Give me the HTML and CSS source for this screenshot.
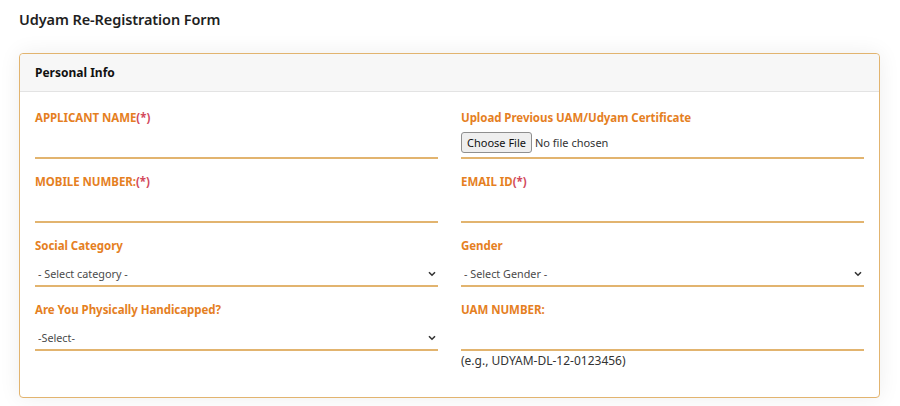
FILE: index.html
```html
<!DOCTYPE html>
<html lang="en">
<head>
<meta charset="utf-8">
<title>Udyam Re-Registration Form</title>
<link rel="stylesheet" href="styles.css">
</head>
<body>
<h1 class="page-title">Udyam Re-Registration Form</h1>
<div class="card">
  <div class="card-header">Personal Info</div>
  <div class="card-body">
    <div class="field">
      <label class="label">APPLICANT NAME<span class="req">(*)</span></label>
      <input class="text-input" type="text">
    </div>
    <div class="field">
      <label class="label">Upload Previous UAM/Udyam Certificate</label>
      <div class="file-wrap"><input class="file-input" type="file"></div>
    </div>
    <div class="field">
      <label class="label">MOBILE NUMBER:<span class="req">(*)</span></label>
      <input class="text-input" type="text">
    </div>
    <div class="field">
      <label class="label">EMAIL ID<span class="req">(*)</span></label>
      <input class="text-input" type="text">
    </div>
    <div class="field">
      <label class="label">Social Category</label>
      <div class="select-wrap">
        <select class="select"><option>- Select category -</option></select>
        <svg class="chev" width="8" height="6" viewBox="0 0 8 6"><path d="M1 1.2 L4 4.2 L7 1.2" fill="none" stroke="#333" stroke-width="1.6"/></svg>
      </div>
    </div>
    <div class="field">
      <label class="label">Gender</label>
      <div class="select-wrap">
        <select class="select"><option>- Select Gender -</option></select>
        <svg class="chev" width="8" height="6" viewBox="0 0 8 6"><path d="M1 1.2 L4 4.2 L7 1.2" fill="none" stroke="#333" stroke-width="1.6"/></svg>
      </div>
    </div>
    <div class="field">
      <label class="label">Are You Physically Handicapped?</label>
      <div class="select-wrap">
        <select class="select"><option>-Select-</option></select>
        <svg class="chev" width="8" height="6" viewBox="0 0 8 6"><path d="M1 1.2 L4 4.2 L7 1.2" fill="none" stroke="#333" stroke-width="1.6"/></svg>
      </div>
    </div>
    <div class="field">
      <label class="label">UAM NUMBER:</label>
      <input class="text-input" type="text">
      <div class="help">(e.g., UDYAM-DL-12-0123456)</div>
    </div>
  </div>
</div>
</body>
</html>
```
FILE: styles.css
```css
html, body {
  margin: 0;
  padding: 0;
  background: #ffffff;
}
body {
  font-family: "Noto Sans", "Open Sans", sans-serif;
  color: #222;
  padding: 9px 20px 0 19px;
  height: 406px;
  box-sizing: border-box;
  overflow: hidden;
}
.page-title {
  margin: 0;
  font-size: 14.5px;
  font-weight: 600;
  line-height: 20px;
  color: #1f1f1f;
  letter-spacing: -0.1px;
}
.card {
  margin-top: 24px;
  width: 861px;
  border: 1px solid #e2b46f;
  border-radius: 4px;
  background: #fff;
  box-shadow: 0 0 22px rgba(0, 0, 0, 0.07);
  box-sizing: border-box;
}
.card-header {
  height: 37px;
  line-height: 37px;
  padding: 0 15px;
  background: #f7f7f7;
  border-bottom: 1px solid #e3e3e3;
  border-radius: 4px 4px 0 0;
  font-size: 12px;
  font-weight: 700;
  color: #111;
}
.card-body {
  display: grid;
  grid-template-columns: 403px 403px;
  column-gap: 23px;
  row-gap: 14px;
  padding: 17px 15px 28px;
}
.field {
  display: flex;
  flex-direction: column;
}
.label {
  font-size: 11.5px;
  font-weight: 700;
  line-height: 18px;
  color: #e5801f;
  letter-spacing: -0.05px;
}
.req {
  color: #d2495c;
}
.text-input {
  height: 32px;
  border: none;
  border-bottom: 2px solid #e2b46f;
  background: transparent;
  padding: 0 3px;
  margin: 0;
  box-sizing: border-box;
  outline: none;
}
.file-wrap {
  height: 32px;
  border-bottom: 2px solid #e2b46f;
  box-sizing: border-box;
  display: flex;
  align-items: center;
}
.file-input {
  font-family: "Noto Sans", "Open Sans", sans-serif;
  font-size: 11px;
  color: #333;
  margin: 0;
}
.file-input::file-selector-button {
  font-family: "Noto Sans", "Open Sans", sans-serif;
  font-size: 11px;
  color: #111;
  background: #efefef;
  border: 1px solid #8f8f8f;
  border-radius: 3px;
  padding: 1px 5px;
  height: 21px;
  margin-right: 3px;
}
.select-wrap {
  position: relative;
  height: 32px;
  border-bottom: 2px solid #e2b46f;
  box-sizing: border-box;
}
.select {
  appearance: none;
  -webkit-appearance: none;
  width: 100%;
  height: 30px;
  border: none;
  background: transparent;
  font-family: "Noto Sans", "Open Sans", sans-serif;
  font-size: 10.8px;
  color: #4a4a4a;
  padding: 6px 3px 0;
  margin: 0;
  outline: none;
}
.chev {
  position: absolute;
  right: 2px;
  top: 16px;
}
.help {
  font-size: 12px;
  line-height: 17px;
  color: #333;
  margin-top: 1px;
}
```
